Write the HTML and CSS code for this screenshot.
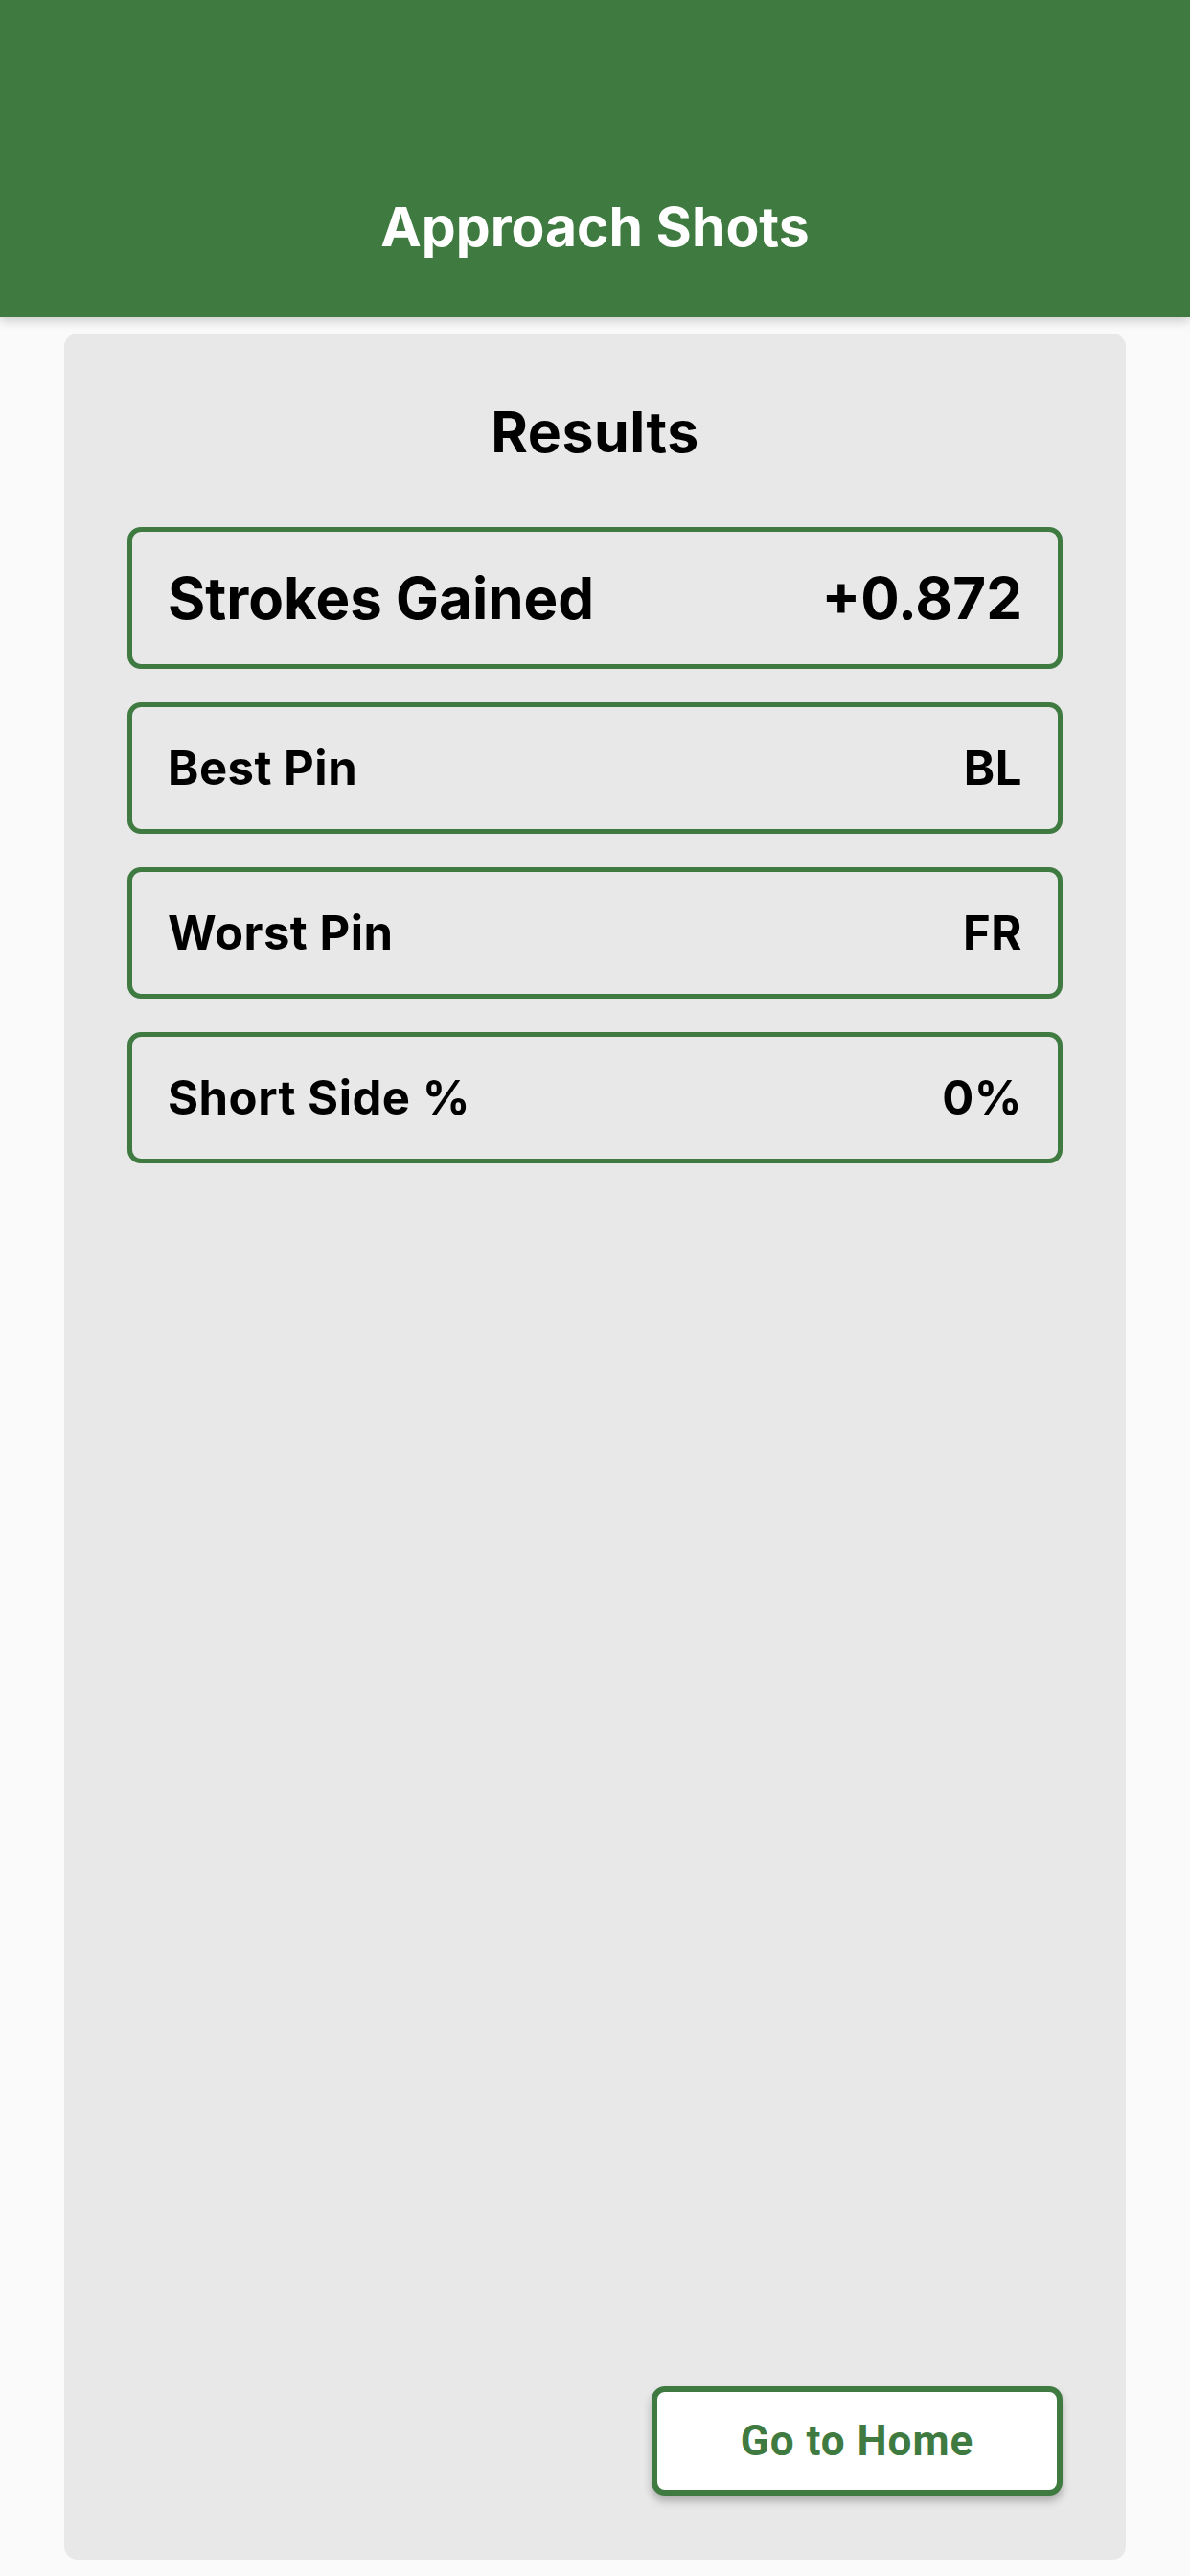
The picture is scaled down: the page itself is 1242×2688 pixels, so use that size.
FILE: index.html
```html
<!DOCTYPE html>
<html lang="en">
<head>
    <meta charset="UTF-8">
    <meta name="viewport" content="width=device-width, initial-scale=1.0">
    <title>Approach Shots</title>
    <link rel="stylesheet" href="styles.css">
</head>
<body>
    <header class="app-bar">
        <h1>Approach Shots</h1>
    </header>

    <main class="results-card">
        <h2>Results</h2>

        <div class="stat-list">
            <div class="stat stat-main">
                <span>Strokes Gained</span>
                <span>+0.872</span>
            </div>
            <div class="stat">
                <span>Best Pin</span>
                <span>BL</span>
            </div>
            <div class="stat">
                <span>Worst Pin</span>
                <span>FR</span>
            </div>
            <div class="stat">
                <span>Short Side %</span>
                <span>0%</span>
            </div>
        </div>

        <div class="actions">
            <button class="home-button">Go to Home</button>
        </div>
    </main>
</body>
</html>
```

FILE: styles.css
```css
* {
    box-sizing: border-box;
}
body {
    margin: 0;
    min-height: 100vh;
    display: flex;
    flex-direction: column;
    background-color: #fafafa;
    font-family: Inter, 'Noto Sans', sans-serif;
    color: #000;
}
.app-bar {
    height: 331px;
    background-color: #3f7a41;
    box-shadow: 0 4px 10px rgba(0, 0, 0, 0.18);
    display: flex;
    align-items: flex-end;
    justify-content: center;
    padding-bottom: 54px;
    position: relative;
    z-index: 1;
}
.app-bar h1 {
    margin: 0;
    color: #fff;
    font-size: 57px;
    font-weight: 700;
    line-height: 80px;
}
.results-card {
    flex: 1;
    margin: 17px 67px;
    background-color: #e8e8e8;
    border-radius: 14px;
    padding: 0 66px 67px 66px;
    display: flex;
    flex-direction: column;
}
.results-card h2 {
    margin: 0;
    padding-top: 63px;
    text-align: center;
    font-size: 59px;
    font-weight: 700;
    letter-spacing: 0.5px;
    line-height: 80px;
}
.stat-list {
    margin-top: 59px;
    display: flex;
    flex-direction: column;
    gap: 35px;
}
.stat {
    height: 137px;
    border: 5px solid #3f7a41;
    border-radius: 14px;
    padding: 0 37px;
    display: flex;
    align-items: center;
    justify-content: space-between;
    font-size: 49px;
    font-weight: 700;
    letter-spacing: 0.5px;
}
.stat-main {
    height: 148px;
    font-size: 60px;
    letter-spacing: 0;
}
.actions {
    margin-top: auto;
    display: flex;
    justify-content: flex-end;
}
.home-button {
    width: 429px;
    height: 114px;
    background-color: #fff;
    border: 6px solid #3f7a41;
    border-radius: 14px;
    box-shadow: 0 6px 8px rgba(0, 0, 0, 0.25);
    color: #3f7a41;
    font-family: Roboto, sans-serif;
    font-size: 44px;
    font-weight: 700;
    letter-spacing: 1px;
    cursor: pointer;
}
```
